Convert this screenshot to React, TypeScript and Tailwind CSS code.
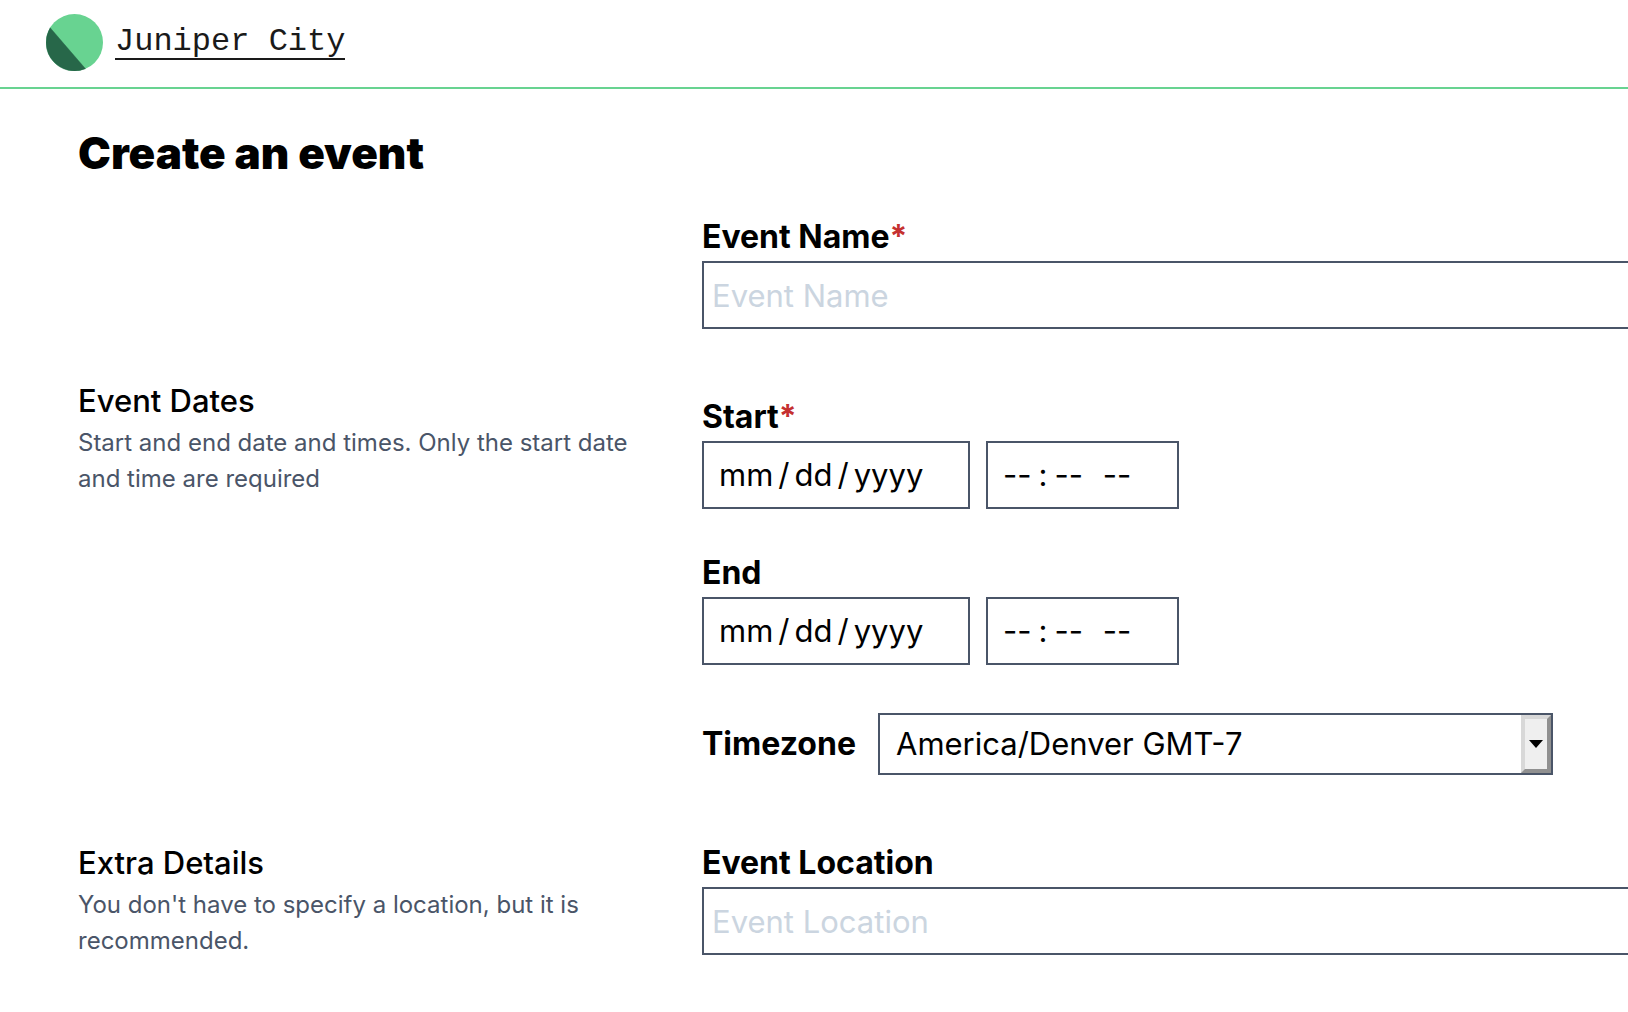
import type { ReactNode } from "react";

const boxClass = "block h-[68px] border-2 border-[#4a5568] bg-white text-[31px] text-black outline-none";

const dateClass =
  "w-[268px] px-3.5 [&::-webkit-calendar-picker-indicator]:hidden [&::-webkit-datetime-edit-text]:px-1";

const timeClass =
  "w-[193px] px-3.5 [&::-webkit-calendar-picker-indicator]:hidden [&::-webkit-datetime-edit-text]:px-1.5";

function Label({ id, text, required }: { id: string; text: string; required?: boolean }) {
  return (
    <label htmlFor={id} className="block text-[32px] leading-[48px] font-bold">
      {text}
      {required && <span className="text-[#c53030]">*</span>}
    </label>
  );
}

function TextField({ id, text, required }: { id: string; text: string; required?: boolean }) {
  return (
    <div>
      <Label id={id} text={text} required={required} />
      <input
        id={id}
        type="text"
        placeholder={text}
        className={`${boxClass} w-full border-r-0 px-2 placeholder:text-[#cbd5e0]`}
      />
    </div>
  );
}

function DateTimeField({ id, text, required }: { id: string; text: string; required?: boolean }) {
  return (
    <div>
      <Label id={id} text={text} required={required} />
      <div className="flex gap-4">
        <input id={id} type="date" className={`${boxClass} ${dateClass}`} />
        <input type="time" aria-label={`${text} time`} className={`${boxClass} ${timeClass}`} />
      </div>
    </div>
  );
}

function Section({ title, note, children }: { title?: string; note?: string; children: ReactNode }) {
  return (
    <section className="grid grid-cols-[592px_1fr] gap-8">
      <div>
        {title && <h2 className="text-[31px] leading-[48px] font-medium">{title}</h2>}
        {note && <p className="max-w-[570px] text-[24px] leading-9 text-[#4a5568]">{note}</p>}
      </div>
      <div>{children}</div>
    </section>
  );
}

export default function App() {
  return (
    <div className="min-h-screen overflow-x-hidden bg-white font-['Inter',sans-serif] text-black">
      <header className="border-b-2 border-[#68d391] pt-3.5 pb-4 pl-[46px]">
        <a href="#home" className="flex w-fit items-center gap-3">
          <svg viewBox="0 0 57 57" className="size-[57px]" aria-hidden="true">
            <circle cx="28.5" cy="28.5" r="28.5" fill="#68d391" />
            <path d="M4.2 13.8 39.5 54.8A28.5 28.5 0 0 1 4.2 13.8Z" fill="#276749" stroke="#276749" strokeWidth="0.4" />
          </svg>
          <span className="border-b-2 border-[#1a1a1a] font-['Liberation_Mono',monospace] text-[32px] leading-8 text-[#1a1a1a]">
            Juniper City
          </span>
        </a>
      </header>

      <main className="pt-[34px] pb-14 pl-[78px]">
        <h1 className="text-[44px] leading-[60px] font-black">Create an event</h1>
        <form className="mt-[30px] flex flex-col gap-12">
          <Section>
            <TextField id="event-name" text="Event Name" required />
          </Section>

          <Section title="Event Dates" note="Start and end date and times. Only the start date and time are required">
            <div className="flex flex-col gap-10 py-4">
              <DateTimeField id="start" text="Start" required />
              <DateTimeField id="end" text="End" />
              <div className="flex items-center pt-2">
                <label htmlFor="timezone" className="w-44 text-[32px] font-bold">
                  Timezone
                </label>
                <div className="relative w-[675px]">
                  <select
                    id="timezone"
                    className="block h-[62px] w-full appearance-none border-2 border-[#4a5568] bg-white px-4 text-[31px] outline-none"
                  >
                    <option>America/Denver GMT-7</option>
                  </select>
                  <span className="pointer-events-none absolute inset-y-0.5 right-0.5 flex w-[30px] items-center justify-center border-4 border-t-[#d8d8d8] border-r-[#909090] border-b-[#909090] border-l-[#d8d8d8] bg-[#efefef]">
                    <svg viewBox="0 0 14 8" className="h-2 w-3.5 shrink-0" aria-hidden="true">
                      <path d="M0 0H14L7 8Z" fill="#000" />
                    </svg>
                  </span>
                </div>
              </div>
            </div>
          </Section>

          <Section title="Extra Details" note="You don't have to specify a location, but it is recommended.">
            <TextField id="event-location" text="Event Location" />
          </Section>
        </form>
      </main>
    </div>
  );
}
